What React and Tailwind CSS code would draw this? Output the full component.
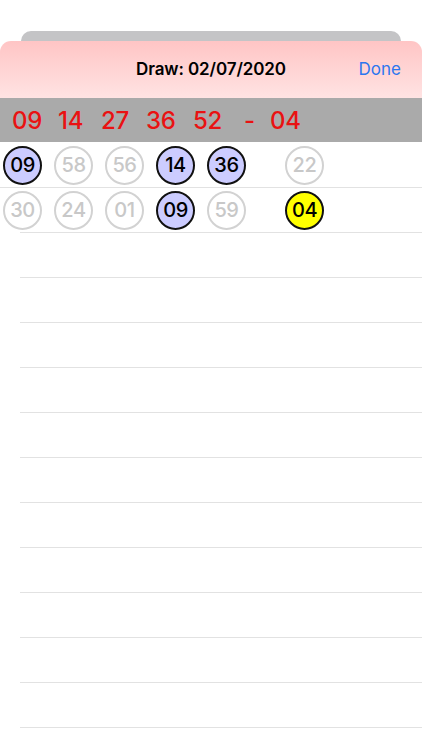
import React from 'react';

const rows = [
  [
    { n: '09', on: true },
    { n: '58' },
    { n: '56' },
    { n: '14', on: true },
    { n: '36', on: true },
    { n: '22', extra: true },
  ],
  [
    { n: '30' },
    { n: '24' },
    { n: '01' },
    { n: '09', on: true },
    { n: '59' },
    { n: '04', bonus: true, extra: true },
  ],
];

// winning numbers with the width each one takes in the band
const drawn = [
  { n: '09', w: 'w-[46px]' },
  { n: '14', w: 'w-[43px]' },
  { n: '27', w: 'w-[45px]' },
  { n: '36', w: 'w-[47px]' },
  { n: '52', w: 'w-[51px]' },
  { n: '-', w: 'w-[26px]' },
  { n: '04', w: 'w-[40px]' },
];

const Ball = ({ n, on, bonus, extra }) => {
  let cls = 'border-2 border-[#d2d2d2] text-[#c8c8c8] bg-white';
  if (on) cls = 'border-2 border-[#111] text-black bg-[#ccccff]';
  if (bonus) cls = 'border-2 border-[#111] text-black bg-[#ffff00]';
  return (
    <div
      className={`w-[39px] h-[39px] rounded-full flex items-center justify-center text-[20px] font-medium tracking-[-0.4px] shrink-0 ${cls} ${extra ? 'ml-[27px]' : ''}`}
    >
      {n}
    </div>
  );
};

const App = () => {
  const empty = Array.from({ length: 12 });

  return (
    <div className="w-[422px] h-[750px] bg-white overflow-hidden font-['Inter',sans-serif]">
      {/* card behind */}
      <div className="mt-[31px] mx-[21px] h-[20px] rounded-t-[10px] bg-[#c4c4c6]"></div>

      <div className="-mt-[10px] relative rounded-t-[11px] overflow-hidden bg-white">
        {/* Header */}
        <div className="h-[57px] bg-linear-to-b from-[#ffc5c5] to-[#ffe3e3] flex items-center justify-center relative">
          <span className="text-[17px] font-semibold text-black tracking-[-0.1px]">Draw: 02/07/2020</span>
          <span className="absolute right-[21px] text-[17px] text-[#2c76ef]">Done</span>
        </div>

        {/* Winning numbers */}
        <div className="h-[44px] bg-[#aaaaaa] flex items-center pl-[12px] pt-[1px] text-[#e91212] text-[24px] font-medium tracking-[-0.3px]">
          {drawn.map((d, i) => (
            <span key={i} className={`${d.w} shrink-0`}>{d.n}</span>
          ))}
        </div>

        {/* Ticket rows */}
        {rows.map((row, i) => (
          <div key={i} className="relative h-[45px] flex items-center gap-[12px] pl-[3px] pt-[1px]">
            {row.map((b, j) => (
              <Ball key={j} {...b} />
            ))}
            <div className={`absolute -bottom-px right-0 h-px bg-[#e2e2e2] ${i === 0 ? 'left-0' : 'left-[20px]'}`}></div>
          </div>
        ))}

        <div className="mt-px">
          {empty.map((_, i) => (
            <div key={i} className="h-[45px] ml-[20px] border-b border-[#e2e2e2]"></div>
          ))}
        </div>
      </div>
    </div>
  );
};

export default App;
